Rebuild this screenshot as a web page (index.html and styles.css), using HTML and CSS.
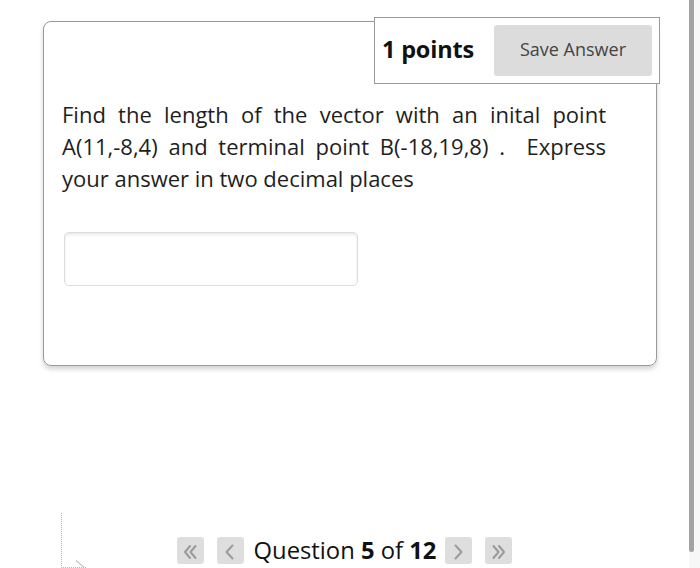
FILE: index.html
```html
<!DOCTYPE html>
<html>
<head>
<meta charset="utf-8">
<link rel="stylesheet" href="styles.css">
</head>
<body>
<div class="page">
  <div class="card">
    <div class="points-box">
      <span class="points">1 points</span>
      <button class="save">Save Answer</button>
    </div>
    <p class="question">Find the length of the vector with an inital point A(11,-8,4) and terminal point B(-18,19,8) .&nbsp; Express your answer in two decimal places</p>
    <div class="answer"></div>
  </div>
  <div class="nav">
    <span class="nav-btn"><svg width="27" height="26" viewBox="0 0 27 26"><polyline points="13,8 8,14 13,20"/><polyline points="18.5,8 13.5,14 18.5,20"/></svg></span>
    <span class="nav-btn nav-gap"><svg width="26" height="26" viewBox="0 0 26 26"><polyline points="15.5,7.5 9.5,14 15.5,20.5"/></svg></span>
    <span class="nav-label">Question <b>5</b> of <b>12</b></span>
    <span class="nav-btn"><svg width="27" height="26" viewBox="0 0 27 26"><polyline points="10.5,7.5 16.5,14 10.5,20.5"/></svg></span>
    <span class="nav-btn nav-gap-left"><svg width="27" height="26" viewBox="0 0 27 26"><polyline points="8.5,8 13.5,14 8.5,20"/><polyline points="14,8 19,14 14,20"/></svg></span>
  </div>
  <div class="resize-corner"></div>
</div>
<div class="scrollbar"><div class="thumb"></div></div>
</body>
</html>
```

FILE: styles.css
```css
html, body {
  margin: 0;
  padding: 0;
  background: #fff;
}
body {
  display: flex;
  height: 568px;
  overflow: hidden;
  font-family: "Open Sans", "Liberation Sans", sans-serif;
  color: #1e1e1e;
}
.page {
  width: 689px;
  flex: none;
  position: relative;
  padding-top: 21px;
  box-sizing: border-box;
}
.card {
  margin-left: 43px;
  width: 614px;
  height: 345px;
  box-sizing: border-box;
  border: 1px solid #9a9a9a;
  border-radius: 8px;
  box-shadow: 0 3px 5px rgba(0,0,0,0.18);
  position: relative;
  padding: 0 0 0 18px;
}
.points-box {
  position: absolute;
  top: -5px;
  right: -4px;
  width: 286px;
  height: 67px;
  box-sizing: border-box;
  border: 1px solid #9a9a9a;
  background: #fff;
  display: flex;
  align-items: center;
  padding: 0 7px 0 7px;
}
.points {
  font-weight: 700;
  font-size: 23.5px;
  color: #111;
  letter-spacing: -0.2px;
  padding-bottom: 4px;
}
.save {
  margin-left: auto;
  width: 158px;
  height: 51px;
  border: none;
  border-radius: 3px;
  background: #dcdcdc;
  font-family: "Open Sans", "Liberation Sans", sans-serif;
  font-size: 18px;
  color: #444;
  padding: 0 0 3px 0;
}
.question {
  margin: 76px 0 0 0;
  width: 544px;
  font-size: 22px;
  line-height: 32px;
  text-align: justify;
}
.answer {
  margin: 38px 0 0 2px;
  width: 294px;
  height: 54px;
  box-sizing: border-box;
  border: 1px solid #dcdcdc;
  border-radius: 5px;
  box-shadow: inset 0 2px 3px rgba(0,0,0,0.08);
}
.nav {
  margin-top: 171px;
  display: flex;
  justify-content: center;
  align-items: center;
  height: 27px;
}
.nav-btn {
  width: 27px;
  height: 27px;
  background: #dedede;
  border-radius: 3px;
  display: flex;
  align-items: center;
  justify-content: center;
}
.nav-btn svg {
  display: block;
  fill: none;
  stroke: #9a9a9a;
  stroke-width: 2;
  stroke-linecap: round;
  stroke-linejoin: round;
}
.nav-gap { margin-left: 13px; }
.nav-gap-left { margin-left: 13px; }
.nav-label {
  font-size: 23.8px;
  margin: 0 9px 0 10px;
  color: #111;
  padding-bottom: 2px;
}
.nav-label b { font-weight: 700; }
.resize-corner {
  position: absolute;
  left: 61px;
  top: 513px;
  width: 24px;
  height: 54px;
  border-left: 1px dotted #b5b5b5;
  border-bottom: 1px dotted #b5b5b5;
  overflow: hidden;
}
.resize-corner::after {
  content: "";
  position: absolute;
  left: 14px;
  top: 47px;
  width: 12px;
  height: 1px;
  background: #bdbdbd;
  transform: rotate(40deg);
  transform-origin: left center;
}
.scrollbar {
  flex: 1;
  background: #f7f7f7;
  position: relative;
}
.thumb {
  width: 5px;
  height: 552px;
  background: #a3a3a3;
  border-radius: 0 0 3px 3px;
}
```
